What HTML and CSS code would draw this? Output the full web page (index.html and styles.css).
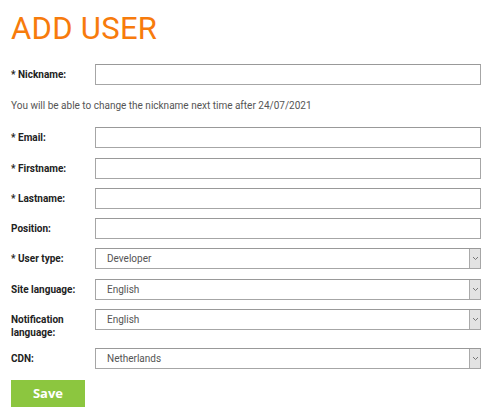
FILE: index.html
```html
<!DOCTYPE html>
<html>
<head>
<meta charset="utf-8">
<link rel="stylesheet" href="styles.css">
</head>
<body>
<div class="page">
  <h1 class="title">ADD USER</h1>
  <form class="form">
    <div class="row">
      <label class="label">* Nickname:</label>
      <div class="field"><input class="input" type="text"></div>
    </div>
    <p class="hint">You will be able to change the nickname next time after 24/07/2021</p>
    <div class="row">
      <label class="label">* Email:</label>
      <div class="field"><input class="input" type="text"></div>
    </div>
    <div class="row">
      <label class="label">* Firstname:</label>
      <div class="field"><input class="input" type="text"></div>
    </div>
    <div class="row">
      <label class="label">* Lastname:</label>
      <div class="field"><input class="input" type="text"></div>
    </div>
    <div class="row">
      <label class="label">Position:</label>
      <div class="field"><input class="input" type="text"></div>
    </div>
    <div class="row">
      <label class="label">* User type:</label>
      <div class="field select-wrap">
        <select class="select"><option>Developer</option></select>
        <span class="arrow"><svg width="7" height="5" viewBox="0 0 7 5"><path d="M1 1 L3.5 3.5 L6 1" fill="none" stroke="#777" stroke-width="1"/></svg></span>
      </div>
    </div>
    <div class="row">
      <label class="label">Site language:</label>
      <div class="field select-wrap">
        <select class="select"><option>English</option></select>
        <span class="arrow"><svg width="7" height="5" viewBox="0 0 7 5"><path d="M1 1 L3.5 3.5 L6 1" fill="none" stroke="#777" stroke-width="1"/></svg></span>
      </div>
    </div>
    <div class="row">
      <label class="label">Notification language:</label>
      <div class="field select-wrap">
        <select class="select"><option>English</option></select>
        <span class="arrow"><svg width="7" height="5" viewBox="0 0 7 5"><path d="M1 1 L3.5 3.5 L6 1" fill="none" stroke="#777" stroke-width="1"/></svg></span>
      </div>
    </div>
    <div class="row">
      <label class="label">CDN:</label>
      <div class="field select-wrap">
        <select class="select"><option>Netherlands</option></select>
        <span class="arrow"><svg width="7" height="5" viewBox="0 0 7 5"><path d="M1 1 L3.5 3.5 L6 1" fill="none" stroke="#777" stroke-width="1"/></svg></span>
      </div>
    </div>
    <div class="actions">
      <button class="save" type="button">Save</button>
    </div>
  </form>
</div>
</body>
</html>
```
FILE: styles.css
```css
* { box-sizing: border-box; }
html, body { margin: 0; padding: 0; background: #fff; }
body { font-family: Roboto, "Liberation Sans", sans-serif; color: #222; }
.page { padding: 11px 19px 0 11px; }
.title {
  margin: 0;
  font-size: 31px;
  line-height: 36px;
  font-weight: 400;
  color: #f77b0c;
  letter-spacing: 0.3px;
}
.form { margin-top: 17px; display: flex; flex-direction: column; }
.row { display: flex; align-items: flex-start; margin-bottom: 9.3px; }
.label {
  width: 84px;
  flex: none;
  font-size: 10px;
  font-weight: 700;
  line-height: 13px;
  padding-top: 4px;
  padding-right: 8px;
  color: #222;
}
.field { flex: 1; position: relative; }
.input, .select {
  display: block;
  width: 100%;
  height: 21px;
  margin: 0;
  border: 1px solid #a6a6a6;
  border-top-color: #999;
  background: #fff;
  font-family: Roboto, "Liberation Sans", sans-serif;
  font-size: 10px;
  color: #555;
  padding: 0 0 0 11px;
  border-radius: 0;
  outline: none;
}
.select { appearance: none; -webkit-appearance: none; }
.arrow {
  position: absolute;
  right: 1px;
  top: 1px;
  bottom: 1px;
  width: 11px;
  background: #e3e3e3;
  border-left: 1px solid #aaa;
  display: flex;
  align-items: center;
  justify-content: center;
  pointer-events: none;
}
.hint {
  margin: 5px 0 15px 0;
  font-size: 10px;
  line-height: 13px;
  color: #555;
}
.actions { margin-top: 1px; }
.save {
  width: 74px;
  height: 27px;
  border: 0;
  background: #8cc63f;
  color: #fff;
  font-family: "Open Sans", sans-serif;
  font-weight: 700;
  font-size: 13px;
  padding: 0;
}
```
